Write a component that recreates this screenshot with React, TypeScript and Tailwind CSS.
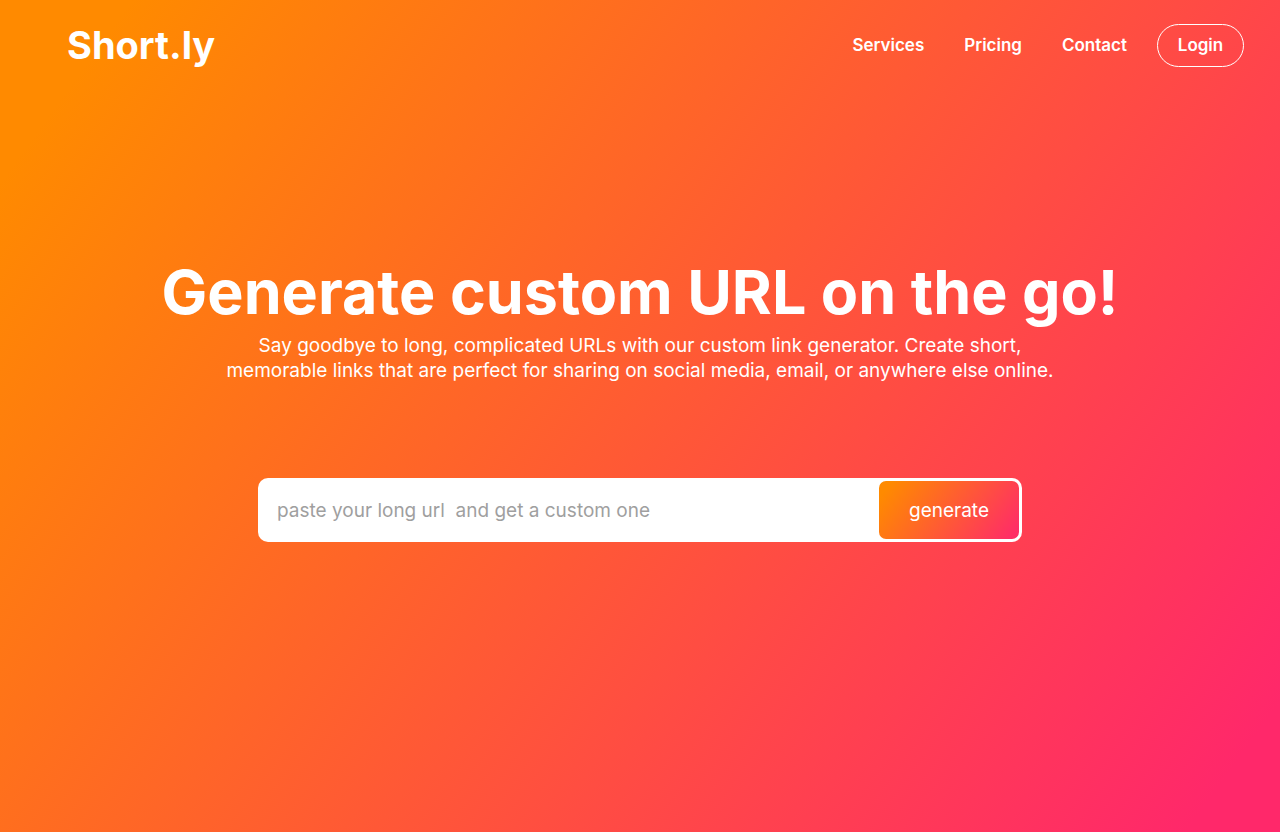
const links = ["Services", "Pricing", "Contact"];

export default function App() {
  return (
    <div className="flex min-h-screen flex-col bg-[linear-gradient(126deg,#ff8a00_7%,#ff286a_95%)] font-['Inter',sans-serif] text-white">
      <header className="flex items-center justify-between pt-6 pr-9 pl-[67px]">
        <a href="#" className="text-[38px] leading-[43px] font-bold">Short.ly</a>
        <nav className="flex items-center text-[17px] font-semibold">
          <div className="flex gap-10 pr-[30px]">
            {links.map((link) => (
              <a key={link} href="#">{link}</a>
            ))}
          </div>
          <button type="button" className="h-[43px] w-[87px] rounded-full border border-white">Login</button>
        </nav>
      </header>
      <main className="flex flex-col items-center px-6 pt-[186px] text-center">
        <h1 className="pb-[2px] text-[61px] leading-[78px] font-bold">Generate custom URL on the go!</h1>
        <p className="max-w-[900px] text-[19px] leading-[25px]">
          Say goodbye to long, complicated URLs with our custom link generator. Create short,
          <br />
          memorable links that are perfect for sharing on social media, email, or anywhere else online.
        </p>
        <form className="mt-[95px] flex h-16 w-full max-w-[764px] rounded-[10px] bg-white p-[3px]" onSubmit={(e) => e.preventDefault()}>
          <input
            type="url"
            aria-label="Long URL"
            placeholder={"paste your long url\u00a0 and get a custom one"}
            className="min-w-0 flex-1 rounded-lg bg-transparent px-4 pt-[3px] text-[19px] text-gray-800 outline-none placeholder:text-[#9f9f9f]"
          />
          <button type="submit" className="w-[140px] rounded-[7px] bg-[linear-gradient(126deg,#ff8a00_7%,#ff2d66_95%)] pt-[3px] text-[19px]">generate</button>
        </form>
      </main>
    </div>
  );
}
